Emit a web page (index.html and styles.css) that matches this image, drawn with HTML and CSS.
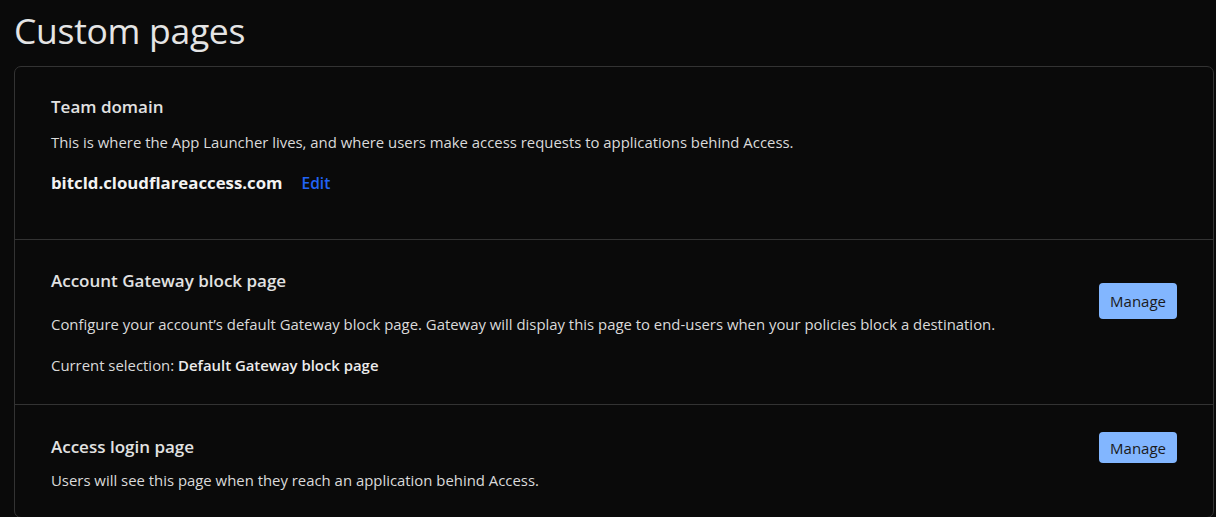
FILE: index.html
```html
<!DOCTYPE html>
<html lang="en">
<head>
    <meta charset="UTF-8">
    <meta name="viewport" content="width=device-width, initial-scale=1.0">
    <title>Custom pages</title>
    <link rel="stylesheet" href="styles.css">
</head>
<body>
    <h1 class="page-title">Custom pages</h1>

    <div class="card">
        <!-- Team domain -->
        <section class="row row-domain">
            <div class="row-body">
                <h2>Team domain</h2>
                <p class="desc">This is where the App Launcher lives, and where users make access requests to applications behind Access.</p>
                <div class="domain">
                    <span class="domain-name">bitcld.cloudflareaccess.com</span>
                    <a href="#" class="edit">Edit</a>
                </div>
            </div>
        </section>

        <!-- Gateway block page -->
        <section class="row row-gateway">
            <div class="row-body">
                <h2>Account Gateway block page</h2>
                <p class="desc">Configure your account’s default Gateway block page. Gateway will display this page to end-users when your policies block a destination.</p>
                <p class="desc">Current selection: <b>Default Gateway block page</b></p>
            </div>
            <button class="manage manage-tall">Manage</button>
        </section>

        <!-- Access login page -->
        <section class="row row-login">
            <div class="row-body">
                <h2>Access login page</h2>
                <p class="desc">Users will see this page when they reach an application behind Access.</p>
            </div>
            <button class="manage">Manage</button>
        </section>
    </div>
</body>
</html>
```

FILE: styles.css
```css
body { margin: 0; padding: 0 2px 0 14px; background: #0a0a0a; color: #dcdcdc; font-family: "Open Sans", "Noto Sans", sans-serif; overflow: hidden; }
.page-title { margin: 0; padding-top: 6px; height: 60px; font-size: 35.5px; font-weight: 400; color: #e4e4e4; letter-spacing: -0.3px; }
.card { border: 1px solid #333; border-radius: 7px; }
.row { display: flex; justify-content: space-between; align-items: flex-start; padding: 0 36px; border-bottom: 1px solid #333; }
.row:last-child { border-bottom: none; }
.row-body h2 { margin: 0; font-size: 17px; line-height: 23px; font-weight: 600; color: #e2e2e2; }
.desc { margin: 0; font-size: 14.9px; line-height: 20px; color: #dadada; }
.desc b { font-weight: 600; color: #ececec; }
.row-domain { padding-top: 28px; height: 144px; }
.row-domain .desc { margin-top: 14px; }
.domain { margin-top: 19px; display: flex; align-items: baseline; gap: 19px; }
.domain-name { font-size: 16.8px; font-weight: 700; color: #f2f2f2; }
.edit { font-size: 15.5px; font-weight: 600; color: #2164f6; text-decoration: none; }
.row-gateway { padding-top: 29px; height: 135px; }
.row-gateway .desc { margin-top: 22px; }
.row-gateway .desc + .desc { margin-top: 21px; }
.row-login { padding-top: 30px; height: 82px; }
.row-login .desc { margin-top: 12px; }
.manage { margin-top: 27px; height: 31px; padding: 0 11px; background: #82b6ff; color: #1a1a1a; border: none; border-radius: 4px; font-family: inherit; font-size: 15px; font-weight: 500; cursor: pointer; }
.manage-tall { margin-top: 14px; height: 36px; }
.row-login .manage { margin-top: -3px; }
```
